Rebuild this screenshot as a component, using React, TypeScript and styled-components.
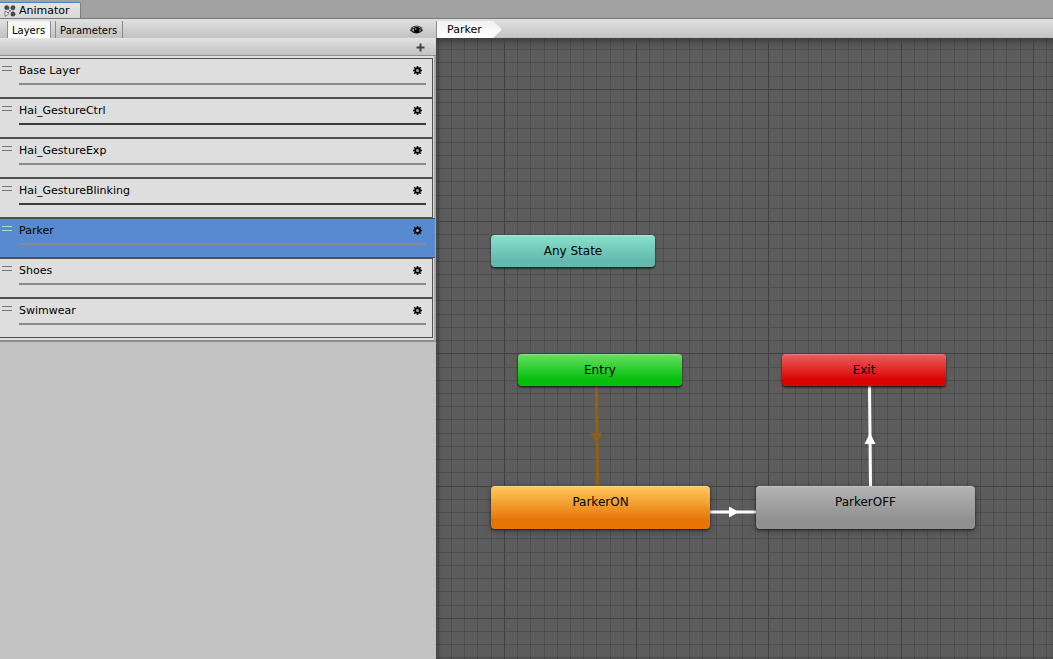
import React from "react";
import styled, { createGlobalStyle } from "styled-components";

const Global = createGlobalStyle`
  * { box-sizing: border-box; }
  html, body, #root { height: 100%; margin: 0; }
  body { background: #a2a2a2; overflow: hidden; }
  body, button { font: 11px/16px "DejaVu Sans", Verdana, sans-serif; color: #000; }
`;

const Window = styled.div`
  display: flex;
  flex-direction: column;
  height: 100%;
  min-height: 560px;
`;

const TabStrip = styled.header`
  display: flex;
  align-items: flex-end;
  flex: none;
  height: 19px;
  background: #a2a2a2;
  border-bottom: 1px solid #7c7c7c;
`;

const WindowTab = styled.button`
  display: flex;
  align-items: center;
  gap: 3px;
  height: 16px;
  width: 81px;
  padding: 0 0 0 4px;
  border: 0;
  border-top: 1px solid #4a80cc;
  border-right: 1px solid #7c7c7c;
  border-radius: 0 2px 0 0;
  background: linear-gradient(#e4e4e4, #d8d8d8);
`;

const Body = styled.div`
  display: flex;
  flex: 1;
  min-height: 0;
  border-top: 1px solid #dedede;
`;

const Sidebar = styled.aside`
  display: flex;
  flex-direction: column;
  flex: 0 0 436px;
  background: #c2c2c2;
`;

const Bar = styled.div`
  display: flex;
  flex: none;
  height: 18px;
  background: linear-gradient(#e0e0e0, #c2c2c2);
`;

const ModeBar = styled(Bar)`
  align-items: stretch;
  padding: 1px 13px 0 7px;
`;

const AddBar = styled(Bar)`
  align-items: center;
  justify-content: flex-end;
  padding-right: 11px;
  border-top: 1px solid #e4e4e4;
  border-bottom: 1px solid #8e8e8e;
`;

const ModeButton = styled.button<{ $active?: boolean }>`
  margin-right: 4px;
  padding: 2px 5px 0 4px;
  border: 1px solid #8c8c8c;
  border-width: 0 1px;
  background: ${(p) => (p.$active ? "linear-gradient(#f4f4f4, #fff)" : "transparent")};
  font-size: 10px;
  line-height: 15px;
`;

const IconButton = styled.button`
  display: flex;
  align-items: center;
  padding: 0;
  border: 0;
  background: none;
`;

const Spacer = styled.div`
  flex: 1;
`;

const LayerList = styled.ul`
  flex: none;
  margin: 0;
  padding: 2px 0 2px;
  list-style: none;
  background: #dedede;
  border-right: 2px solid #a8a8a8;
  border-bottom: 2px solid #8e8e8e;
`;

const LayerItem = styled.li<{ $selected: boolean }>`
  display: flex;
  align-items: flex-start;
  height: 40px;
  margin-right: ${(p) => (p.$selected ? "-1px" : "1px")};
  padding: 4px ${(p) => (p.$selected ? "9px" : "6px")} 0 2px;
  border: 1px solid #505050;
  border-left: 0;
  border-right-width: ${(p) => (p.$selected ? "0" : "1px")};
  background: ${(p) => (p.$selected ? "#588ad0" : "#dedede")};
`;

const Grip = styled.span<{ $selected: boolean }>`
  width: 10px;
  height: 5px;
  margin: 3px 7px 0 0;
  border: 1px solid ${(p) => (p.$selected ? "#a8dcd8" : "#767676")};
  border-width: 1px 0;
`;

const LayerContent = styled.div`
  flex: 1;
`;

const LayerHead = styled.div`
  display: flex;
  align-items: center;
  justify-content: space-between;
  height: 16px;
  padding-right: 4px;
`;

const WeightTrack = styled.div<{ $weighted: boolean }>`
  height: 2px;
  margin-top: 4px;
  background: ${(p) => (p.$weighted ? "#3c3c3c" : "#8a8a8a")};
`;

const Main = styled.main`
  display: flex;
  flex-direction: column;
  flex: 1;
  min-width: 0;
`;

const Crumb = styled.button`
  width: 66px;
  padding: 0 0 0 10px;
  border: 0;
  border-left: 1px solid #8c8c8c;
  background: linear-gradient(#f0f0f0, #fff);
  clip-path: polygon(0 0, 57px 0, 100% 50%, 57px 100%, 0 100%);
  text-align: left;
`;

const CrumbBar = styled(Bar)`
  padding-top: 1px;
`;

const Canvas = styled.section`
  position: relative;
  flex: 1;
  min-height: 500px;
  overflow: hidden;
  background: #5c5c5c;
  box-shadow: inset 0 8px 8px -5px #383838, inset 5px 0 6px -4px #404040;
`;

const CanvasDrawing = styled.svg`
  position: absolute;
  inset: 0;
  width: 100%;
  height: 100%;
`;

const StateNode = styled.button<{ $x: number; $y: number; $large?: boolean; $from: string; $to: string }>`
  position: absolute;
  left: ${(p) => p.$x}px;
  top: ${(p) => p.$y}px;
  width: ${(p) => (p.$large ? 219 : 164)}px;
  height: ${(p) => (p.$large ? 43 : 32)}px;
  padding: 0 0 ${(p) => (p.$large ? 12 : 0)}px;
  border: 0;
  border-radius: 4px;
  background: linear-gradient(${(p) => p.$from}, ${(p) => p.$to} 80%);
  box-shadow: 0 1px 2px rgba(0, 0, 0, 0.6), 0 2px ${(p) => (p.$large ? 7 : 2)}px rgba(0, 0, 0, 0.3), inset 0 1px rgba(255, 255, 255, 0.2);
  font-size: 12px;
`;

const layers = [
  { name: "Base Layer", weighted: false },
  { name: "Hai_GestureCtrl", weighted: true },
  { name: "Hai_GestureExp", weighted: false },
  { name: "Hai_GestureBlinking", weighted: true },
  { name: "Parker", weighted: false },
  { name: "Shoes", weighted: false },
  { name: "Swimwear", weighted: false },
];

const states = [
  { name: "Any State", x: 55, y: 197, from: "#8ae2cd", to: "#63b9ae" },
  { name: "Entry", x: 82, y: 316, from: "#69e062", to: "#04c00d" },
  { name: "Exit", x: 346, y: 316, from: "#ea6060", to: "#da0404" },
  { name: "ParkerON", x: 55, y: 448, from: "#ffca5e", to: "#e67506", large: true },
  { name: "ParkerOFF", x: 320, y: 448, from: "#b4b4b4", to: "#909090", large: true },
];

const steps = Array.from({ length: 240 }, (_, i) => i - 5);
const gridStep = 13.225;

const Grid = () => (
  <g shapeRendering="crispEdges">
    {[false, true].map((major) =>
      steps
        .filter((i) => (i % 10 === 0) === major)
        .map((i) => {
          const x = Math.floor(68.4 + i * gridStep);
          const y = Math.floor(51.3 + i * gridStep);
          const fill = major ? "#414141" : "#000";
          const opacity = major ? 1 : 0.14;
          return (
            <React.Fragment key={i}>
              <rect x={x} y="0" width="1" height="100%" fill={fill} opacity={opacity} />
              <rect x="0" y={y} width="100%" height="1" fill={fill} opacity={opacity} />
            </React.Fragment>
          );
        })
    )}
  </g>
);

const AnimatorIcon = () => (
  <svg width="12" height="12" viewBox="0 0 12 12" aria-hidden="true">
    <path d="M3 3h6M9 3v6M3 3l6 6M2 10l7-7" stroke="#888" fill="none" />
    <g fill="#4a4a4a">
      <circle cx="2.7" cy="2.7" r="2.4" />
      <circle cx="9" cy="2.7" r="2.4" />
      <circle cx="9" cy="9.2" r="2.4" />
    </g>
    <path d="M1 6v5.5l4-3z" fill="#eee" stroke="#555" strokeWidth=".7" />
  </svg>
);

const EyeIcon = () => (
  <svg width="13" height="10" viewBox="0 0 13 10" aria-hidden="true">
    <path d="M.8 5.200Q6.500 0 12.200 5.200Q6.500 10.500 .8 5.200z" fill="#ccc" stroke="#222" strokeWidth="1.300" />
    <path d="M.8 3.500Q6.500 -1.500 12.200 3.500" fill="none" stroke="#333" strokeWidth="1.200" />
    <circle cx="6.700" cy="5" r="2.900" fill="#000" />
    <circle cx="5.800" cy="4" r=".7" fill="#ccc" />
  </svg>
);

const PlusIcon = () => (
  <svg width="9" height="9" viewBox="0 0 9 9" aria-hidden="true">
    <path d="M4.500 .5v8M.5 4.500h8" stroke="#444" strokeWidth="2" />
  </svg>
);

const GearIcon = () => (
  <svg width="9" height="10" viewBox="0 0 9 10" aria-hidden="true">
    <path d="M4.500 0v9M0 4.500h9M1.200 1.200l6.600 6.600M7.800 1.200l-6.600 6.600" stroke="#0a0a0a" strokeWidth="1.500" />
    <circle cx="4.500" cy="4.500" r="2.400" fill="#aaa" stroke="#000" strokeWidth="1.700" />
  </svg>
);

const Transitions = () => (
  <>
    <path d="M160.500 348L161.500 448" stroke="#8f6115" strokeWidth="3" />
    <path d="M155 395h11l-5.500 10z" fill="#8f6115" />
    <path d="M433.500 348L434.500 448" stroke="#fff" strokeWidth="3" />
    <path d="M428.500 406h11l-5.500-11z" fill="#fff" />
    <path d="M274 474h46" stroke="#fff" strokeWidth="3" />
    <path d="M293 468.500v11l10-5.500z" fill="#fff" />
  </>
);

export default function App() {
  return (
    <Window>
      <Global />
      <TabStrip>
        <WindowTab>
          <AnimatorIcon />
          Animator
        </WindowTab>
      </TabStrip>
      <Body>
        <Sidebar>
          <ModeBar>
            <ModeButton $active>Layers</ModeButton>
            <ModeButton>Parameters</ModeButton>
            <Spacer />
            <IconButton aria-label="Toggle layer view">
              <EyeIcon />
            </IconButton>
          </ModeBar>
          <AddBar>
            <IconButton aria-label="Add layer">
              <PlusIcon />
            </IconButton>
          </AddBar>
          <LayerList>
            {layers.map(({ name, weighted }) => {
              const selected = name === "Parker";
              return (
                <LayerItem key={name} $selected={selected}>
                  <Grip $selected={selected} />
                  <LayerContent>
                    <LayerHead>
                      {name}
                      <IconButton aria-label={`${name} settings`}>
                        <GearIcon />
                      </IconButton>
                    </LayerHead>
                    <WeightTrack $weighted={weighted} />
                  </LayerContent>
                </LayerItem>
              );
            })}
          </LayerList>
        </Sidebar>
        <Main>
          <CrumbBar>
            <Crumb>Parker</Crumb>
          </CrumbBar>
          <Canvas>
            <CanvasDrawing aria-hidden="true">
              <Grid />
              <Transitions />
            </CanvasDrawing>
            {states.map((s) => (
              <StateNode key={s.name} $x={s.x} $y={s.y} $from={s.from} $to={s.to} $large={s.large}>
                {s.name}
              </StateNode>
            ))}
          </Canvas>
        </Main>
      </Body>
    </Window>
  );
}
